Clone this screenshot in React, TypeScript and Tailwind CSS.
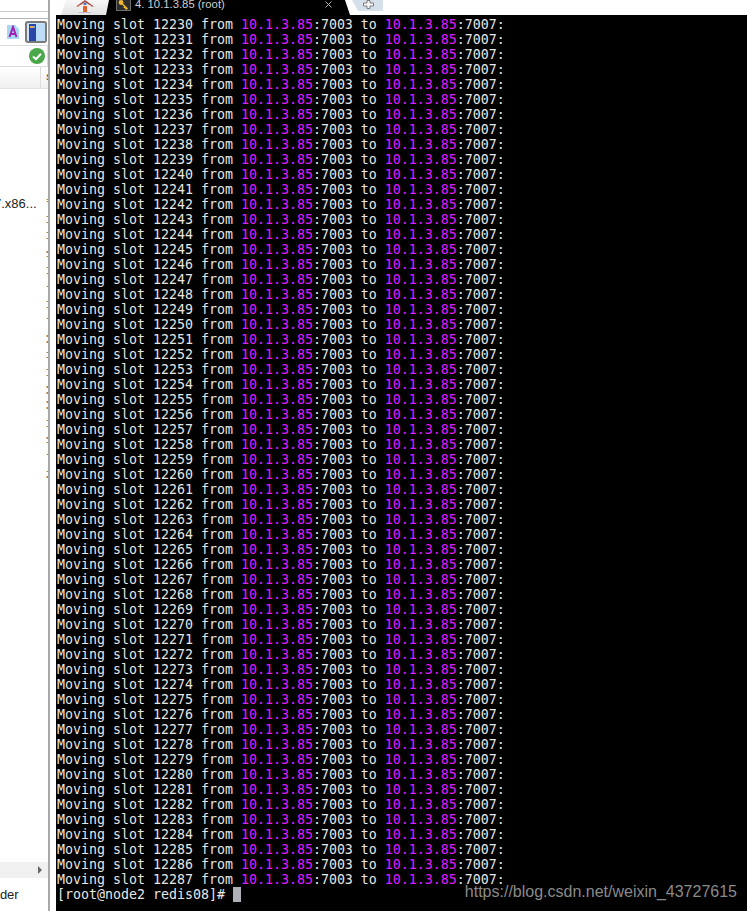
import React from "react";

const rows = Array.from({ length: 58 }, (_, i) => 12230 + i);
const dots = [200,202,217,223,233,239,252,257,268,274,287,302,308,319,336,342,353,358,370,376,387,393,402,408,421,427,438,443,455,472,477];

function Ip() {
  return <span className="text-[#e01cff]">10.1.3.85</span>;
}

export default function App() {
  return (
    <div className="flex h-[911px] w-[747px] overflow-hidden bg-white font-['Liberation_Sans',sans-serif]">
      <aside className="flex w-[50px] shrink-0 flex-col overflow-hidden border-r-2 border-[#a8a8a8]">
        <div className="h-[12px] w-[49px] shrink-0 border-b border-r border-[#c8c8c8] bg-white" />
        <div className="mt-[6px] flex h-[27px] w-[48px] shrink-0 items-center justify-end gap-[6px] border-t border-[#b4b4b4] pr-[1px]">
          <svg width="12" height="14" viewBox="0 0 12 14">
            <path d="M0 0h8l4 4v10H0z" fill="#a9d8f5" />
            <path d="M2.5 12L6 2l3.5 10M3.7 9h4.6" fill="none" stroke="#a321b0" strokeWidth="2" />
          </svg>
          <div className="flex h-[22px] w-[22px] rounded-[3px] border-2 border-[#7b7b7b] bg-[#cfe6fa]">
            <svg width="18" height="18" viewBox="0 0 18 18">
              <rect x="2" y="1" width="7" height="17" fill="#2b44a8" />
              <rect x="3" y="3" width="3" height="2" fill="#d8b25a" />
              <rect x="6" y="3" width="2" height="2" fill="#7fa6df" />
              <rect x="9" y="1" width="9" height="17" fill="#bcdcf7" />
            </svg>
          </div>
        </div>
        <div className="flex h-[22px] w-[48px] shrink-0 items-center justify-end border-y border-r border-[#dcdcdc] pr-[2px]">
          <svg width="16" height="16" viewBox="0 0 16 16">
            <circle cx="8" cy="8" r="8" fill="#4aa84a" />
            <path d="M4 8.5l3 2.6 5-5.4" fill="none" stroke="#fff" strokeWidth="2" />
          </svg>
        </div>
        <div className="flex h-[22px] w-[48px] shrink-0 items-center justify-end border-b border-[#e4e4e4] bg-gradient-to-b from-[#ffffff] to-[#f0f0f0]">
          <div className="flex h-full w-[8px] items-center overflow-hidden border-l border-[#dcdcdc] pl-[5px] text-[9px] leading-none text-[#333]">S</div>
        </div>
        <div className="relative min-h-0 flex-1">
          <div className="-ml-[6px] mt-[107px] whitespace-nowrap text-[13px] leading-[15px] text-[#222]">7.x86...</div>
          <svg className="absolute left-0 top-[-90px]" width="48" height="600">
            {dots.map((y) => (
              <rect key={y} x="46.5" y={y} width="1.5" height={y % 3 === 0 ? 2 : 1} fill="#c97a22" />
            ))}
          </svg>
        </div>
        <div className="flex h-[16px] w-[48px] shrink-0 items-center justify-end bg-[#f0f0f0] pr-[6px]">
          <div className="h-0 w-0 border-y-[4px] border-l-[4px] border-y-transparent border-l-[#666]" />
        </div>
        <div className="flex h-[33px] items-start overflow-hidden whitespace-nowrap pt-[8px] text-[13px] leading-[18px] text-[#222]">
          <span className="-ml-[3px]">lder</span>
        </div>
      </aside>
      <main className="flex min-w-0 flex-1 flex-col">
        <div className="flex h-[15px] shrink-0 items-start bg-white pl-[11px]">
          <div className="flex h-[15px] w-[48px] shrink-0 bg-gradient-to-b from-[#f8f8f8] to-[#e2e2e2] pl-[15px] [clip-path:polygon(5px_0,48px_0,45px_100%,0_100%)]">
            <svg width="18" height="13" viewBox="0 0 18 13">
              <path d="M0 6.5L9 0l9 6.5h-2.5L9 2 2.5 6.5z" fill="#b5473c" />
              <rect x="3.5" y="5" width="11" height="7" fill="#f2eeee" />
              <rect x="7" y="6" width="4" height="6" fill="#e0622a" />
              <rect x="7.5" y="2.5" width="3" height="2.5" fill="#3f7fc4" />
              <rect x="3" y="12" width="12" height="1" fill="#b8b8d0" />
            </svg>
          </div>
          <div className="-ml-[3px] flex h-[15px] w-[244px] shrink-0 items-start bg-black pl-[10px] [clip-path:polygon(3px_0,239px_0,244px_100%,0_100%)]">
            <div className="flex h-[11px] w-[15px] shrink-0 items-center justify-center border-x border-b border-[#6e6e6e] bg-[#2d2d2d]">
              <svg width="11" height="10" viewBox="0 0 11 10">
                <circle cx="3" cy="2.5" r="2.4" fill="#f0b72e" />
                <path d="M4 3.5l5.5 5.5M7 6.5l-1 1.5M8.5 8l-1 1.5" stroke="#f0b72e" strokeWidth="1.6" />
              </svg>
            </div>
            <span className="ml-[4px] whitespace-nowrap text-[11.3px] leading-[8px] text-[#cfcfcf]">4. 10.1.3.85 (root)</span>
            <svg className="ml-auto mr-[18px] mt-[1px] shrink-0" width="7" height="7" viewBox="0 0 7 7">
              <path d="M0.5 0.5l6 6M6.5 0.5l-6 6" stroke="#b0b0b0" strokeWidth="1" />
            </svg>
          </div>
          <div className="ml-[2px] flex h-[11px] w-[31px] shrink-0 items-start justify-center bg-[#d6e0ea] [clip-path:polygon(0_0,100%_0,100%_100%,6px_100%)]">
            <svg className="mr-[-1px]" width="11" height="9" viewBox="0 0 11 9">
              <path d="M4 0.5h3v2.5h3.5v3H7v2.5H4V6H0.5V3H4z" fill="#f4f4f4" stroke="#808080" />
            </svg>
          </div>
        </div>
        <div className="relative ml-[6px] flex-1 bg-black pl-[1px] pt-[2px] font-['DejaVu_Sans_Mono',monospace] text-[13.29px] leading-[15px] text-[#e6e6e6]">
          {rows.map((n) => (
            <div key={n} className="h-[15px] whitespace-pre">
              Moving slot {n} from <Ip />:7003 to <Ip />:7007:
            </div>
          ))}
          <div className="flex h-[15px] whitespace-pre">
            [root@node2 redis08]#{" "}
            <span className="h-[15px] w-[8px] bg-[#b0b0b8]" />
          </div>
          <div className="absolute bottom-[10px] right-[10px] font-['Liberation_Sans',sans-serif] text-[16px] leading-[18px] text-[#8a8a8a]">
            https://blog.csdn.net/weixin_43727615
          </div>
        </div>
      </main>
    </div>
  );
}
